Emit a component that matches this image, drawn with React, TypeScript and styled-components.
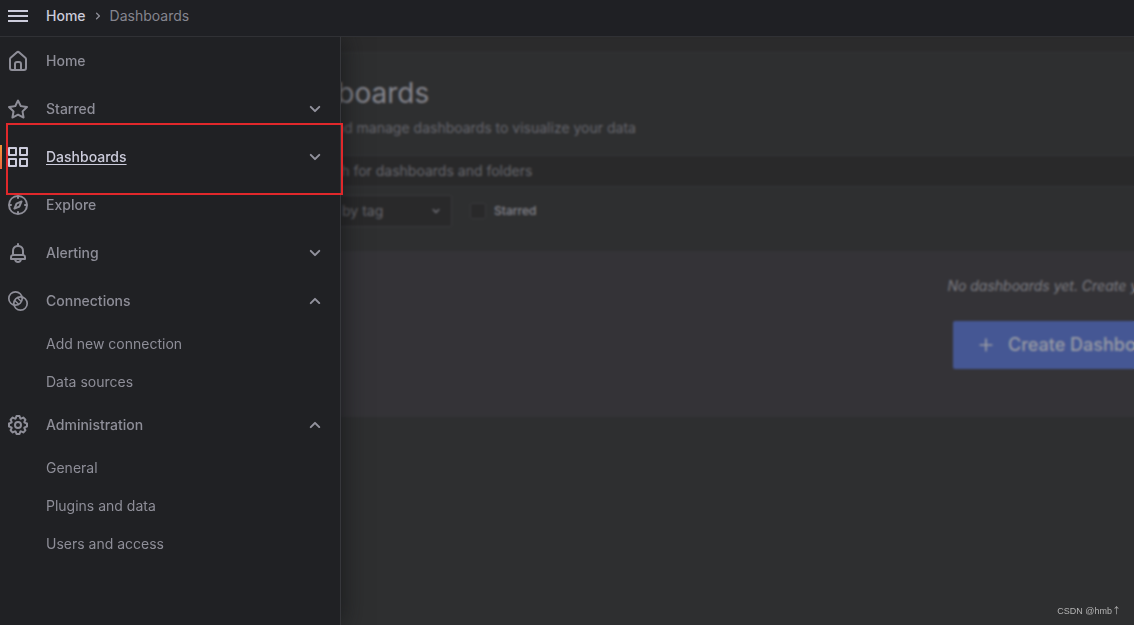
import React from 'react';
import styled, { createGlobalStyle } from 'styled-components';

const GlobalStyle = createGlobalStyle`
  *, *::before, *::after { box-sizing: border-box; }
  body {
    margin: 0;
    background: #2e2f30;
    color: #8e8e98;
    font-family: Inter, 'Liberation Sans', sans-serif;
    font-size: 14px;
    line-height: 22px;
  }
  button, input, select { font: inherit; color: inherit; }
  ul { list-style: none; margin: 0; padding: 0; }
  a { color: inherit; text-decoration: none; }
`;

const ICONS = {
  home: 'M20,8h0L14,2.74a3,3,0,0,0-4,0L4,8a3,3,0,0,0-1,2.26V19a3,3,0,0,0,3,3H18a3,3,0,0,0,3-3V10.25A3,3,0,0,0,20,8ZM14,20H10V15a1,1,0,0,1,1-1h2a1,1,0,0,1,1,1Zm5-1a1,1,0,0,1-1,1H16V15a3,3,0,0,0-3-3H11a3,3,0,0,0-3,3v5H6a1,1,0,0,1-1-1V10.25a1,1,0,0,1,.34-.75l6-5.25a1,1,0,0,1,1.32,0l6,5.25a1,1,0,0,1,.34.75Z',
  star: 'M22,9.67A1,1,0,0,0,21.14,9l-5.69-.83L12.9,3a1,1,0,0,0-1.8,0L8.55,8.16,2.86,9a1,1,0,0,0-.81.68,1,1,0,0,0,.25,1l4.13,4-1,5.68A1,1,0,0,0,6.9,21.44L12,18.77l5.1,2.67a.93.93,0,0,0,.46.12,1,1,0,0,0,.59-.19,1,1,0,0,0,.4-1l-1-5.68,4.13-4A1,1,0,0,0,22,9.67Zm-6.15,4a1,1,0,0,0-.29.88l.72,4.2-3.76-2a1.06,1.06,0,0,0-.94,0l-3.76,2,.72-4.2a1,1,0,0,0-.29-.88l-3-3,4.21-.61a1,1,0,0,0,.76-.55L12,5.7l1.88,3.82a1,1,0,0,0,.76.55l4.21.61Z',
  apps: 'M10,13H3a1,1,0,0,0-1,1v7a1,1,0,0,0,1,1h7a1,1,0,0,0,1-1V14A1,1,0,0,0,10,13ZM9,20H4V15H9ZM21,2H14a1,1,0,0,0-1,1v7a1,1,0,0,0,1,1h7a1,1,0,0,0,1-1V3A1,1,0,0,0,21,2ZM20,9H15V4h5Zm1,4H14a1,1,0,0,0-1,1v7a1,1,0,0,0,1,1h7a1,1,0,0,0,1-1V14A1,1,0,0,0,21,13Zm-1,7H15V15h5ZM10,2H3A1,1,0,0,0,2,3v7a1,1,0,0,0,1,1h7a1,1,0,0,0,1-1V3A1,1,0,0,0,10,2ZM9,9H4V4H9Z',
  compass: 'M12,2A10,10,0,1,0,22,12,10,10,0,0,0,12,2Zm1,17.93V19a1,1,0,0,0-2,0v.93A8,8,0,0,1,4.07,13H5a1,1,0,0,0,0-2H4.07A8,8,0,0,1,11,4.07V5a1,1,0,0,0,2,0V4.07A8,8,0,0,1,19.93,11H19a1,1,0,0,0,0,2h.93A8,8,0,0,1,13,19.93ZM15.14,7.55l-5,2.12a1,1,0,0,0-.52.52l-2.12,5a1,1,0,0,0,.21,1.1,1,1,0,0,0,.7.3.93.93,0,0,0,.4-.09l5-2.12a1,1,0,0,0,.52-.52l2.12-5a1,1,0,0,0-1.31-1.31Zm-2.49,5.1-2.28,1,1-2.28,2.28-1Z',
  bell: 'M18,13.18V10a6,6,0,0,0-5-5.91V3a1,1,0,0,0-2,0V4.09A6,6,0,0,0,6,10v3.18A3,3,0,0,0,4,16v2a1,1,0,0,0,1,1H8.14a4,4,0,0,0,7.72,0H19a1,1,0,0,0,1-1V16A3,3,0,0,0,18,13.18ZM8,10a4,4,0,0,1,8,0v3H8Zm4,10a2,2,0,0,1-1.72-1h3.44A2,2,0,0,1,12,20Zm6-3H6V16a1,1,0,0,1,1-1H17a1,1,0,0,1,1,1Z',
  cog: 'M21.32,9.55l-1.89-.63.89-1.78A1,1,0,0,0,20.13,6L18,3.87a1,1,0,0,0-1.15-.19l-1.78.89-.63-1.89A1,1,0,0,0,13.5,2h-3a1,1,0,0,0-.95.68L8.92,4.57,7.14,3.68A1,1,0,0,0,6,3.87L3.87,6a1,1,0,0,0-.19,1.15l.89,1.78-1.89.63A1,1,0,0,0,2,10.5v3a1,1,0,0,0,.68.95l1.89.63-.89,1.78A1,1,0,0,0,3.87,18L6,20.13a1,1,0,0,0,1.15.19l1.78-.89.63,1.89a1,1,0,0,0,.95.68h3a1,1,0,0,0,.95-.68l.63-1.89,1.78.89A1,1,0,0,0,18,20.13L20.13,18a1,1,0,0,0,.19-1.15l-.89-1.78,1.89-.63A1,1,0,0,0,22,13.5v-3A1,1,0,0,0,21.32,9.55ZM20,12.78l-1.2.4A2,2,0,0,0,17.64,16l.57,1.14-1.1,1.1L16,17.64a2,2,0,0,0-2.79,1.16l-.4,1.2H11.22l-.4-1.2A2,2,0,0,0,8,17.64l-1.14.57-1.1-1.1L6.36,16A2,2,0,0,0,5.2,13.18L4,12.78V11.22l1.2-.4A2,2,0,0,0,6.36,8L5.79,6.89l1.1-1.1L8,6.36A2,2,0,0,0,10.82,5.2l.4-1.2h1.56l.4,1.2A2,2,0,0,0,16,6.36l1.14-.57,1.1,1.1L17.64,8a2,2,0,0,0,1.16,2.79l1.2.4ZM12,8a4,4,0,1,0,4,4A4,4,0,0,0,12,8Zm0,6a2,2,0,1,1,2-2A2,2,0,0,1,12,14Z',
  down: 'M17,9.17a1,1,0,0,0-1.41,0L12,12.71,8.46,9.17a1,1,0,0,0-1.41,0,1,1,0,0,0,0,1.42l4.24,4.24a1,1,0,0,0,1.42,0L17,10.59A1,1,0,0,0,17,9.17Z',
  up: 'M17,13.41,12.71,9.17a1,1,0,0,0-1.42,0L7.05,13.41a1,1,0,0,0,0,1.42,1,1,0,0,0,1.41,0L12,11.29l3.54,3.54a1,1,0,0,0,.7.29,1,1,0,0,0,.71-.29A1,1,0,0,0,17,13.41Z',
  right: 'M14.83,11.29,10.59,7.05a1,1,0,0,0-1.42,0,1,1,0,0,0,0,1.41L12.71,12,9.17,15.54a1,1,0,0,0,0,1.41,1,1,0,0,0,.71.29,1,1,0,0,0,.71-.29l4.24-4.24A1,1,0,0,0,14.83,11.29Z',
  menu: 'M2,6H22V8H2ZM2,11H22V13H2ZM2,16H22V18H2Z',
  plus: 'M19,11H13V5a1,1,0,0,0-2,0v6H5a1,1,0,0,0,0,2h6v6a1,1,0,0,0,2,0V13h6a1,1,0,0,0,0-2Z',
  search: 'M21.71,20.29,18,16.61A9,9,0,1,0,16.61,18l3.68,3.68a1,1,0,0,0,1.42-1.42ZM11,18a7,7,0,1,1,7-7A7,7,0,0,1,11,18Z',
};
type IconName = keyof typeof ICONS;

const Svg = styled.svg`
  display: block;
  flex: none;
  fill: currentColor;
`;

const Icon = ({ name, size = 24 }: { name: IconName; size?: number }) => (
  <Svg width={size} height={size} viewBox="0 0 24 24" aria-hidden="true">
    <path d={ICONS[name]} />
  </Svg>
);

const ConnectionsIcon = () => (
  <Svg width={24} height={24} viewBox="0 0 24 24" aria-hidden="true">
    <g fill="none" stroke="currentColor" strokeWidth="1.7">
      <circle cx="9.5" cy="9.5" r="6.7" />
      <circle cx="14.5" cy="14.5" r="6.7" />
      <path d="M8.8 11.4 12.6 15.2M11.4 8.8 15.2 12.6" strokeWidth="1.4" />
    </g>
  </Svg>
);

const Shell = styled.div`
  display: flex;
  flex-direction: column;
  min-height: 100vh;
`;

const TopBar = styled.header`
  display: flex;
  align-items: center;
  gap: 16px;
  height: 37px;
  padding: 0 6px 4px;
  background: #1f2024;
  border-bottom: 1px solid #303135;
`;

const IconButton = styled.button`
  display: flex;
  padding: 0;
  border: 0;
  background: none;
  color: #ccccdc;
`;

const Breadcrumbs = styled.nav`
  display: flex;
  align-items: center;
  gap: 4px;
`;

const Crumb = styled.a<{ $strong?: boolean }>`
  color: ${(p) => (p.$strong ? '#ccccdc' : '#85858f')};
  font-weight: ${(p) => (p.$strong ? 500 : 400)};
`;

const Body = styled.div`
  position: relative;
  flex: 1;
  display: flex;
  overflow: hidden;
`;

const Drawer = styled.nav`
  position: absolute;
  top: 0;
  bottom: 0;
  left: 0;
  width: 341px;
  background: #202124;
  border-right: 1px solid #36373b;
  box-shadow: 0 0 24px rgba(16, 17, 20, 0.75);
`;

const NavItem = styled.li`
  position: relative;
`;

const NavRow = styled.div<{ $active?: boolean }>`
  display: flex;
  align-items: center;
  gap: 16px;
  height: 48px;
  padding: 0 13px 0 6px;
  font-weight: 500;
  color: ${(p) => (p.$active ? '#ccccdc' : '#8e8e98')};
  a { text-decoration: ${(p) => (p.$active ? 'underline' : 'none')}; }
`;

const NavLink = styled.a`
  text-underline-offset: 2px;
  margin-right: auto;
`;

const ToggleButton = styled(IconButton)`
  color: #92929d;
`;

const SubLink = styled.a`
  display: flex;
  align-items: center;
  height: 38px;
  padding-left: 46px;
`;

const ActiveBar = styled.span`
  position: absolute;
  left: 0;
  top: 12px;
  width: 2px;
  height: 24px;
  background: linear-gradient(#f2963a, #ee6440);
`;

const Highlight = styled.span`
  position: absolute;
  z-index: 1;
  top: -10px;
  left: 6px;
  right: -3px;
  height: 72px;
  border: 2px solid #e0282b;
  pointer-events: none;
`;

const Page = styled.main`
  flex: 1;
  min-width: 1891px;
  background: #2e2f30;
`;

const Strip = styled.div`
  height: 16px;
  background: #2b2b2c;
  border-bottom: 1px solid #323335;
`;

const Content = styled.div`
  display: flex;
  flex-direction: column;
  padding: 22px 20px 0 270px;
`;

const Title = styled.h1`
  margin: 0;
  font-size: 28px;
  font-weight: 400;
  line-height: 36px;
  color: #85858d;
`;

const Subtitle = styled.p`
  margin: 6px 0 16px;
  padding-left: 10px;
  color: #66666d;
`;

const SearchBox = styled.label`
  display: flex;
  align-items: center;
  gap: 8px;
  height: 32px;
  padding: 0 8px;
  background: #29292a;
  border: 1px solid #343538;
  color: #66666c;
`;

const SearchInput = styled.input`
  flex: 1;
  padding: 0;
  border: 0;
  outline: 0;
  background: none;
  &::placeholder { color: #66666c; opacity: 1; }
`;

const Filters = styled.div`
  display: flex;
  align-items: center;
  gap: 18px;
  margin: 8px 0 24px;
`;

const SelectBox = styled.div`
  position: relative;
  width: 182px;
  color: #75757c;
  svg {
    position: absolute;
    right: 8px;
    top: 8px;
    pointer-events: none;
  }
`;

const TagSelect = styled.select`
  display: block;
  appearance: none;
  width: 100%;
  height: 32px;
  padding: 0 34px;
  background: #29292a;
  border: 1px solid #38393b;
  border-radius: 2px;
  color: #66666c;
`;

const CheckLabel = styled.label`
  display: flex;
  align-items: center;
  gap: 8px;
  font-size: 12px;
  font-weight: 500;
  color: #85858d;
`;

const Checkbox = styled.input`
  appearance: none;
  width: 16px;
  height: 16px;
  margin: 0;
  background: #29292a;
  border: 1px solid #38393b;
  border-radius: 2px;
`;

const EmptyState = styled.section`
  display: flex;
  flex-direction: column;
  align-items: center;
  gap: 24px;
  padding: 24px 0 48px;
  background: #343337;
`;

const EmptyText = styled.em`
  color: #7c7c82;
`;

const PrimaryButton = styled.button`
  display: flex;
  align-items: center;
  gap: 12px;
  height: 48px;
  padding: 0 24px 0 23px;
  border: 0;
  border-radius: 2px;
  background: #455794;
  color: #9a9ca4;
  font-size: 18px;
  font-weight: 500;
`;

const Backdrop = styled.div`
  position: absolute;
  inset: 0;
  backdrop-filter: blur(1px);
`;

const Watermark = styled.small`
  position: absolute;
  right: 13px;
  bottom: 8px;
  font: 9px/12px 'Liberation Sans', sans-serif;
  color: #b4b4b4;
`;

const Arrow = styled.span`
  font-family: 'Noto Sans CJK SC', sans-serif;
`;

interface Section {
  label: string;
  icon: IconName | 'connections';
  active?: boolean;
  toggle?: 'up' | 'down';
  children?: string[];
}

const SECTIONS: Section[] = [
  { label: 'Home', icon: 'home' },
  { label: 'Starred', icon: 'star', toggle: 'down' },
  { label: 'Dashboards', icon: 'apps', toggle: 'down', active: true },
  { label: 'Explore', icon: 'compass' },
  { label: 'Alerting', icon: 'bell', toggle: 'down' },
  { label: 'Connections', icon: 'connections', toggle: 'up', children: ['Add new connection', 'Data sources'] },
  { label: 'Administration', icon: 'cog', toggle: 'up', children: ['General', 'Plugins and data', 'Users and access'] },
];

const NavSection = ({ label, icon, active, toggle, children }: Section) => (
  <NavItem>
    {active && <ActiveBar />}
    <NavRow $active={active}>
      {icon === 'connections' ? <ConnectionsIcon /> : <Icon name={icon} />}
      <NavLink href="#" aria-current={active ? 'page' : undefined}>{label}</NavLink>
      {toggle && (
        <ToggleButton type="button" aria-expanded={toggle === 'up'} aria-label={`Toggle ${label}`}>
          <Icon name={toggle} />
        </ToggleButton>
      )}
    </NavRow>
    {children && (
      <ul>
        {children.map((child) => (
          <li key={child}><SubLink href="#">{child}</SubLink></li>
        ))}
      </ul>
    )}
    {active && <Highlight />}
  </NavItem>
);

export default function App() {
  return (
    <Shell>
      <GlobalStyle />
      <TopBar>
        <IconButton type="button" aria-label="Close menu"><Icon name="menu" /></IconButton>
        <Breadcrumbs aria-label="Breadcrumbs">
          <Crumb href="#" $strong>Home</Crumb>
          <Icon name="right" size={16} />
          <Crumb href="#">Dashboards</Crumb>
        </Breadcrumbs>
      </TopBar>
      <Body>
        <Page>
          <Strip />
          <Content>
            <Title>Dashboards</Title>
            <Subtitle>Create and manage dashboards to visualize your data</Subtitle>
            <SearchBox>
              <Icon name="search" size={16} />
              <SearchInput type="text" aria-label="Search" placeholder="Search for dashboards and folders" />
            </SearchBox>
            <Filters>
              <SelectBox>
                <TagSelect aria-label="Filter by tag"><option>Filter by tag</option></TagSelect>
                <Icon name="down" size={16} />
              </SelectBox>
              <CheckLabel><Checkbox type="checkbox" />Starred</CheckLabel>
            </Filters>
            <EmptyState>
              <EmptyText>No dashboards yet. Create your first!</EmptyText>
              <PrimaryButton type="button"><Icon name="plus" size={20} />Create Dashboard</PrimaryButton>
            </EmptyState>
          </Content>
        </Page>
        <Backdrop />
        <Drawer aria-label="Main menu">
          <ul>{SECTIONS.map((s) => <NavSection key={s.label} {...s} />)}</ul>
        </Drawer>
        <Watermark>CSDN @hmb<Arrow>↑</Arrow></Watermark>
      </Body>
    </Shell>
  );
}
